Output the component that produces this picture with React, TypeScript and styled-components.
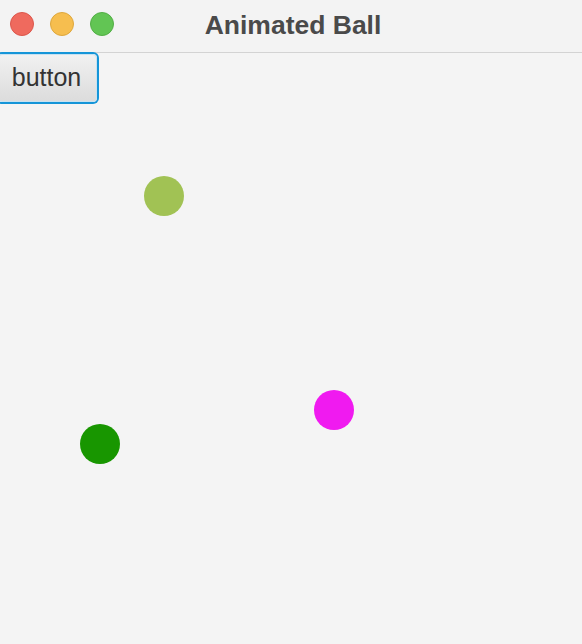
import React from "react";
import styled, { createGlobalStyle } from "styled-components";

const Global = createGlobalStyle`
  html, body { margin: 0; padding: 0; background: #f4f4f4; }
  body { font-family: "Liberation Sans", Arial, sans-serif; }
`;

const Window = styled.div`
  width: 582px;
  height: 644px;
  display: flex;
  flex-direction: column;
  background: #f4f4f4;
  overflow: hidden;
`;

const TitleBar = styled.div`
  height: 53px;
  box-sizing: border-box;
  border-bottom: 1px solid #d3d3d3;
  background: #f3f3f3;
  display: grid;
  grid-template-columns: 1fr auto 1fr;
  align-items: center;
  padding: 0 10px;
`;

const Lights = styled.div`
  display: flex;
  gap: 16px;
  align-self: start;
  margin-top: 12px;
`;

const Light = styled.span<{ $fill: string; $edge: string }>`
  width: 24px;
  height: 24px;
  border-radius: 50%;
  box-sizing: border-box;
  background: ${(p) => p.$fill};
  border: 1px solid ${(p) => p.$edge};
`;

const Title = styled.div`
  font-family: "Liberation Sans", Arial, sans-serif;
  font-weight: 700;
  font-size: 26.5px;
  color: #4a4a4a;
  margin-left: 4px;
  margin-top: -2px;
`;

const Canvas = styled.div`
  position: relative;
  flex: 1;
`;

const Button = styled.button`
  display: block;
  margin: 1px 0 0 -2px;
  width: 99px;
  height: 48px;
  box-sizing: border-box;
  border: 1px solid #c8e2f1;
  border-radius: 4px;
  box-shadow: 0 0 0 2px #1595d8;
  background: linear-gradient(#f1f1f1, #dcdcdc);
  font-family: "Liberation Sans", Arial, sans-serif;
  font-size: 25px;
  color: #333333;
  padding: 0 2px 1px 0;
  cursor: pointer;
`;

const Ball = styled.div<{ $color: string }>`
  position: absolute;
  width: 40px;
  height: 40px;
  border-radius: 50%;
  background: ${(p) => p.$color};
`;

const balls = [
  { x: 144, y: 176, color: "#a1c254" },
  { x: 314, y: 390, color: "#f01af0" },
  { x: 80, y: 424, color: "#189600" },
];

export default function App() {
  return (
    <>
      <Global />
      <Window>
        <TitleBar>
          <Lights>
            <Light $fill="#ef6a5e" $edge="#dc564b" />
            <Light $fill="#f6be4f" $edge="#dea73c" />
            <Light $fill="#62c554" $edge="#52ae45" />
          </Lights>
          <Title>Animated Ball</Title>
          <div />
        </TitleBar>
        <Canvas>
          <Button>button</Button>
          {balls.map((b, i) => (
            <Ball key={i} $color={b.color} style={{ left: b.x, top: b.y - 53 }} />
          ))}
        </Canvas>
      </Window>
    </>
  );
}
